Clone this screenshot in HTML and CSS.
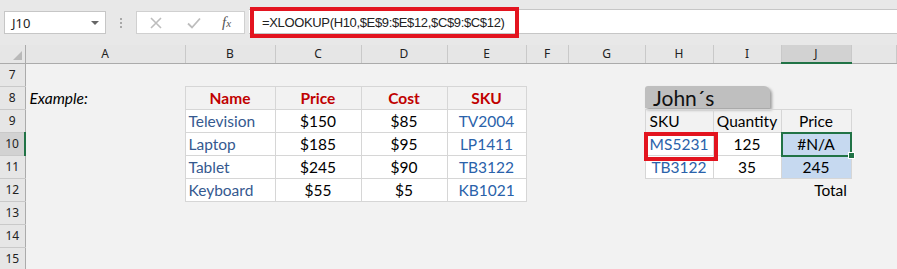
FILE: index.html
```html
<!DOCTYPE html>
<html lang="en">
<head>
    <meta charset="UTF-8">
    <title>XLOOKUP example</title>
    <link rel="stylesheet" href="styles.css">
</head>
<body>
<div class="formula-bar">
    <div class="name-box"><span>J10</span><span class="caret"></span></div>
    <div class="grip"><i></i><i></i><i></i></div>
    <div class="fx-box">
        <svg class="cancel" width="14" height="14" viewBox="0 0 14 14"><path d="M2 2L12 12M12 2L2 12" stroke="#bdbdbd" stroke-width="1.6" fill="none"/></svg>
        <svg class="enter" width="16" height="14" viewBox="0 0 16 14"><path d="M2 7.5L6 11.5L14 2.5" stroke="#bdbdbd" stroke-width="1.8" fill="none"/></svg>
        <span class="fx">f<small>x</small></span>
    </div>
    <div class="formula"><span class="formula-text">=XLOOKUP(H10,$E$9:$E$12,$C$9:$C$12)</span></div>
</div>
<table class="sheet">
    <colgroup>
        <col class="c-row"><col class="c-a"><col class="c-b"><col class="c-c"><col class="c-d"><col class="c-e">
        <col class="c-f"><col class="c-g"><col class="c-h"><col class="c-i"><col class="c-j"><col>
    </colgroup>
    <tr class="head">
        <th class="corner"><span class="tri"></span></th>
        <th class="col">A</th><th class="col">B</th><th class="col">C</th><th class="col">D</th><th class="col">E</th>
        <th class="col">F</th><th class="col">G</th><th class="col">H</th><th class="col">I</th><th class="col on">J</th><th class="col"></th>
    </tr>
    <tr>
        <th class="row">7</th><td></td><td></td><td></td><td></td><td></td><td></td><td></td><td></td><td></td><td></td><td></td>
    </tr>
    <tr>
        <th class="row">8</th><td class="note">Example:</td>
        <td class="b hd">Name</td><td class="b hd">Price</td><td class="b hd">Cost</td><td class="b hd">SKU</td>
        <td></td><td></td><td colspan="2" class="tag-cell"><div class="tag">John´s</div></td><td></td><td></td>
    </tr>
    <tr>
        <th class="row">9</th><td></td>
        <td class="b w name">Television</td><td class="b w mid">$150</td><td class="b w mid">$85</td><td class="b w mid sku">TV2004</td>
        <td></td><td></td><td class="b left">SKU</td><td class="b mid">Quantity</td><td class="b mid">Price</td><td></td>
    </tr>
    <tr>
        <th class="row on">10</th><td></td>
        <td class="b w name">Laptop</td><td class="b w mid">$185</td><td class="b w mid">$95</td><td class="b w mid sku">LP1411</td>
        <td></td><td></td><td class="b w mid sku pick">MS5231<span class="ring"></span></td><td class="b w mid">125</td>
        <td class="b mid sel active">#N/A<span class="cursor"></span><span class="handle"></span></td><td></td>
    </tr>
    <tr>
        <th class="row">11</th><td></td>
        <td class="b w name">Tablet</td><td class="b w mid">$245</td><td class="b w mid">$90</td><td class="b w mid sku">TB3122</td>
        <td></td><td></td><td class="b w mid sku">TB3122</td><td class="b w mid">35</td><td class="b mid sel">245</td><td></td>
    </tr>
    <tr>
        <th class="row">12</th><td></td>
        <td class="b w name">Keyboard</td><td class="b w mid">$55</td><td class="b w mid">$5</td><td class="b w mid sku">KB1021</td>
        <td></td><td></td><td></td><td></td><td class="total">Total</td><td></td>
    </tr>
    <tr>
        <th class="row">13</th><td></td><td></td><td></td><td></td><td></td><td></td><td></td><td></td><td></td><td></td><td></td>
    </tr>
    <tr>
        <th class="row">14</th><td></td><td></td><td></td><td></td><td></td><td></td><td></td><td></td><td></td><td></td><td></td>
    </tr>
    <tr>
        <th class="row">15</th><td></td><td></td><td></td><td></td><td></td><td></td><td></td><td></td><td></td><td></td><td></td>
    </tr>
</table>
</body>
</html>
```

FILE: styles.css
```css
* {
    margin: 0;
    padding: 0;
    box-sizing: border-box;
}

body {
    width: 897px;
    height: 269px;
    overflow: hidden;
    background: #f2f2f2;
    font-family: Lato, "Liberation Sans", sans-serif;
}

/* formula bar */
.formula-bar {
    display: flex;
    align-items: flex-start;
    height: 45px;
    background: #e8e8e8;
}

.name-box {
    margin: 11px 0 0 4px;
    width: 102px;
    height: 23px;
    background: #fff;
    border: 1px solid #c6c6c6;
    display: flex;
    align-items: center;
    justify-content: space-between;
    padding: 0 6px 0 7px;
    font: 13px "Noto Sans", sans-serif;
    color: #222;
}

.caret {
    border-left: 4px solid transparent;
    border-right: 4px solid transparent;
    border-top: 4px solid #666;
}

.grip {
    width: 30px;
    height: 23px;
    margin-top: 11px;
    display: flex;
    flex-direction: column;
    align-items: center;
    justify-content: center;
    gap: 2px;
}

.grip i {
    width: 2px;
    height: 2px;
    background: #a8a8a8;
}

.fx-box {
    margin-top: 11px;
    width: 109px;
    height: 23px;
    background: #fff;
    border: 1px solid #d0d0d0;
    display: flex;
    align-items: center;
    padding-left: 12px;
}

.cancel {
    margin-right: 23px;
}

.enter {
    margin-right: 20px;
}

.fx {
    font: italic 15px "Liberation Serif", serif;
    color: #555;
}

.fx small {
    font-size: 11px;
}

.formula {
    margin: 9px 0 0 4px;
    flex: 1;
    height: 25px;
    background: #fff;
    border-top: 1px solid #c6c6c6;
    border-bottom: 1px solid #c6c6c6;
    display: flex;
    align-items: center;
}

.formula-text {
    margin: 2px 0 0 1px;
    width: 269px;
    height: 31px;
    border: 4px solid #e3141f;
    padding-left: 8px;
    display: flex;
    align-items: center;
    font: 13px "Liberation Sans", sans-serif;
    letter-spacing: -0.35px;
    color: #222;
    white-space: nowrap;
}

/* grid */
.sheet {
    border-collapse: collapse;
    table-layout: fixed;
    width: 897px;
}

.c-row { width: 25px; }
.c-a { width: 160px; }
.c-b { width: 90px; }
.c-c { width: 86px; }
.c-d { width: 86px; }
.c-e { width: 79px; }
.c-f { width: 42px; }
.c-g { width: 77px; }
.c-h { width: 68px; }
.c-i { width: 68px; }
.c-j { width: 70px; }

.head th {
    height: 17px;
}

.corner {
    position: relative;
    background: #e6e6e6;
    border-right: 1px solid #ababab;
    border-bottom: 1px solid #ababab;
}

.tri {
    position: absolute;
    right: 3px;
    bottom: 3px;
    border-left: 9px solid transparent;
    border-bottom: 9px solid #b9b9b9;
}

.col {
    background: #e6e6e6;
    border-right: 1px solid #c9c9c9;
    border-bottom: 1px solid #ababab;
    font: normal 12px "Noto Sans", sans-serif;
    color: #222;
}

.col.on {
    background: #d2d2d2;
    border-bottom: 2px solid #217346;
}

.row {
    height: 23px;
    background: #e6e6e6;
    border-right: 1px solid #ababab;
    border-bottom: 1px solid #c9c9c9;
    font: normal 12px "Noto Sans", sans-serif;
    color: #222;
}

.row.on {
    background: #d2d2d2;
    border-right: 2px solid #217346;
}

td {
    height: 23px;
    padding: 1px 3px 0;
    font-size: 15.5px;
    color: #000;
    white-space: nowrap;
}

.b {
    border: 1px solid #d6d6d6;
}

.w {
    background: #fff;
}

.mid {
    text-align: center;
}

.note {
    font-style: italic;
    padding-left: 4px;
}

.hd {
    text-align: center;
    font-weight: bold;
    color: #c00000;
}

.name {
    color: #35598f;
}

.sku {
    color: #2a62aa;
}

.left {
    padding-left: 4px;
}

.tag-cell {
    padding: 0;
    vertical-align: top;
}

.tag {
    width: 125px;
    height: 22px;
    background: #bfbfbf;
    border-radius: 3px 6px 0 0;
    box-shadow: 2px 2px 3px rgba(0, 0, 0, 0.35);
    padding-left: 8px;
    font-size: 21px;
    line-height: 24px;
    color: #111;
}

.pick,
.active {
    position: relative;
}

.ring {
    position: absolute;
    left: -2px;
    top: -1px;
    width: 74px;
    height: 29px;
    border: 4px solid #e3141f;
}

.sel {
    background: #c6d9f0;
}

.cursor {
    position: absolute;
    left: -1px;
    top: -1px;
    width: 71px;
    height: 25px;
    border: 2px solid #217346;
}

.handle {
    position: absolute;
    right: -4px;
    bottom: -4px;
    width: 7px;
    height: 7px;
    background: #217346;
    border: 1px solid #fff;
}

.total {
    text-align: right;
    padding-right: 4px;
}
```
